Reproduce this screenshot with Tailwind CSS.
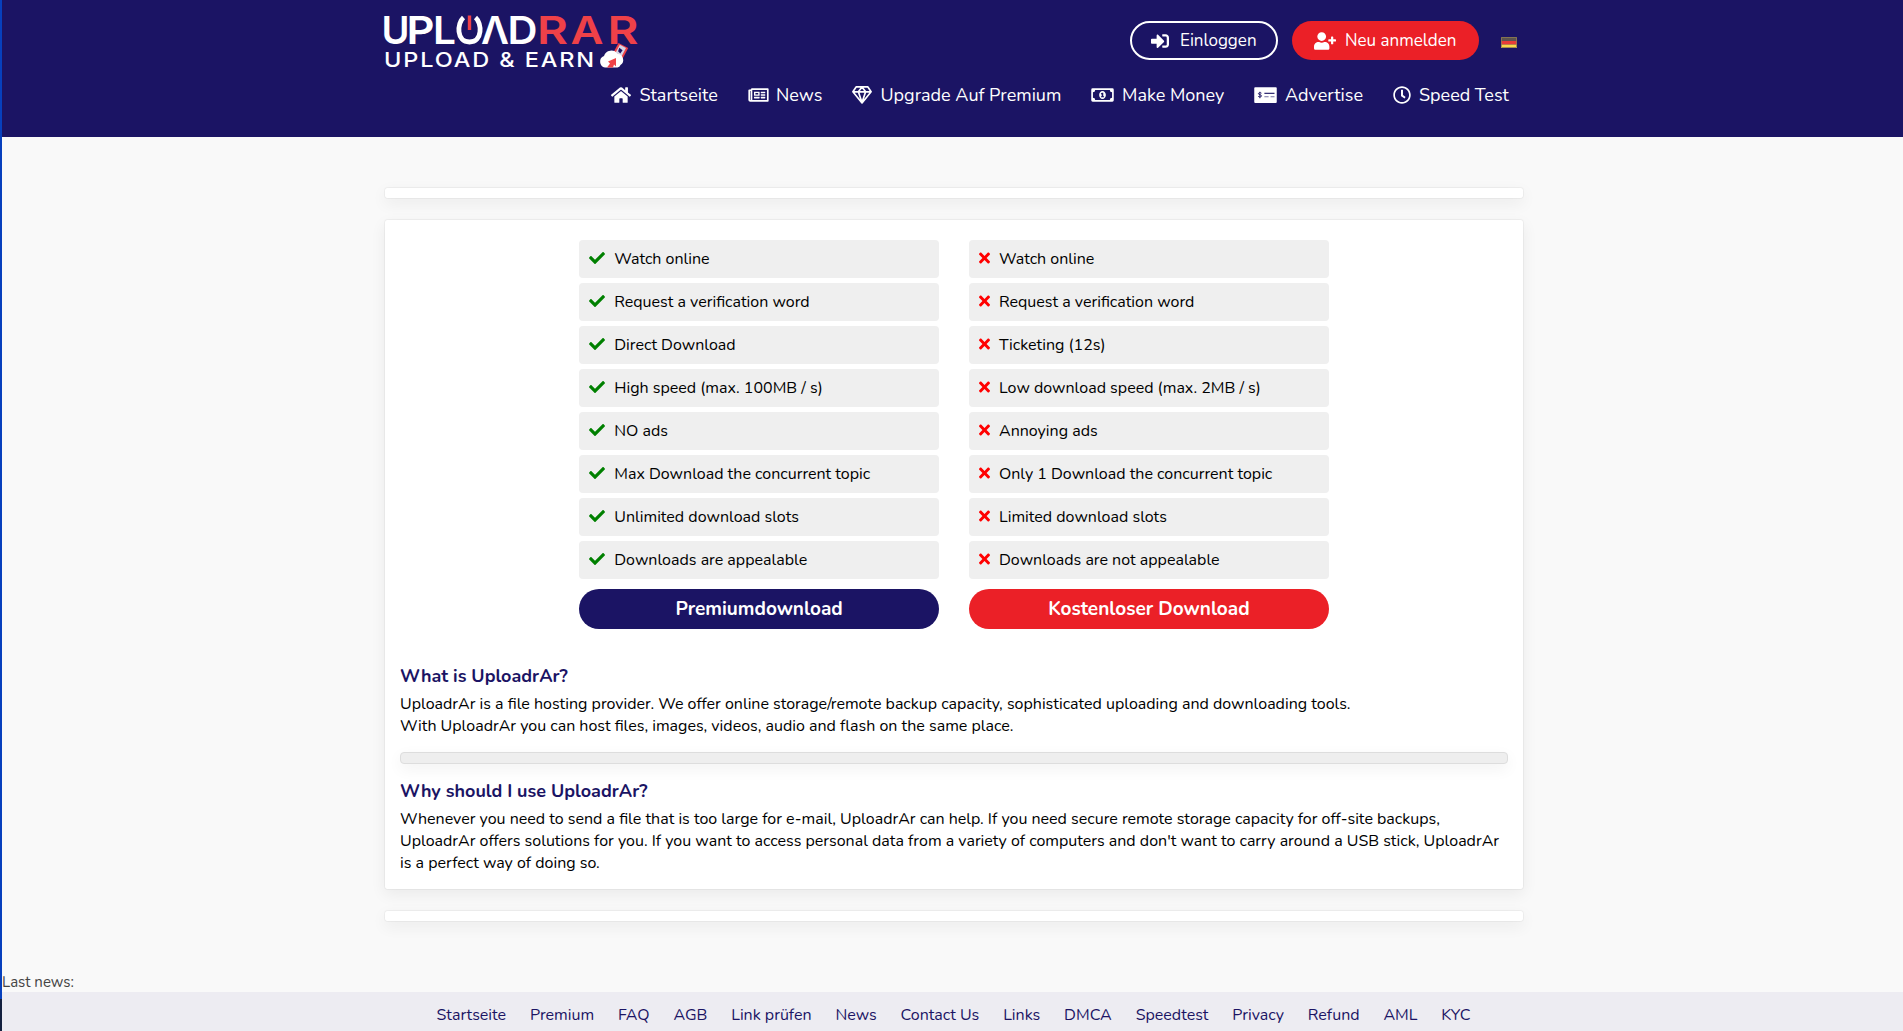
<!DOCTYPE html>
<html lang="de">

<head>
    <meta charset="UTF-8">
    <meta name="viewport" content="width=device-width, initial-scale=1.0">
    <title>UploadrAr</title>
    <script src="https://cdn.jsdelivr.net/npm/@tailwindcss/browser@4"></script>
</head>

<body class="flex h-[1031px] overflow-hidden bg-[#f9f9f9] font-['Nunito',Lato,sans-serif] text-base leading-[22px] text-black">
    <div class="flex w-[2px] shrink-0 flex-col">
        <div class="h-[999px] bg-[#0740bd]"></div>
        <div class="flex-1 bg-[#14203f]"></div>
    </div>

    <div class="flex min-w-0 flex-1 flex-col">
        <header class="h-[137px] bg-[#1b1464] pl-[382px] text-lg leading-6 text-white">
            <div class="flex h-[83px] w-[1140px]">
                <svg class="mt-[5px] h-[72px] w-[260px] shrink-0 overflow-visible" viewBox="384 5 260 72" font-family="Inter,sans-serif" font-weight="600">
                    <g font-size="38.5" fill="#fff">
                        <text x="381.5" y="43.500" textLength="28" lengthAdjust="spacingAndGlyphs">U</text>
                        <text x="406.5" y="43.500" textLength="28" lengthAdjust="spacingAndGlyphs">P</text>
                        <text x="433" y="43.500" textLength="23" lengthAdjust="spacingAndGlyphs">L</text>
                        <text x="481" y="43.500" textLength="28" lengthAdjust="spacingAndGlyphs">Λ</text>
                        <text x="507.500" y="43.500" textLength="30" lengthAdjust="spacingAndGlyphs">D</text>
                    </g>
                    <path d="M463.500 17.500C457 23 456 42 469.500 42C483 42 482 23 475.500 17.500" fill="none" stroke="#fff" stroke-width="4.8" />
                    <path d="M469.500 15.500v14.500" stroke="#ef4148" stroke-width="3.400" />
                    <g font-size="38.5" fill="#ef4148">
                        <text x="537" y="43.500" textLength="31" lengthAdjust="spacingAndGlyphs">R</text>
                        <text x="570.500" y="43.500" textLength="33" lengthAdjust="spacingAndGlyphs">A</text>
                        <text x="607.500" y="43.500" textLength="31" lengthAdjust="spacingAndGlyphs">R</text>
                    </g>
                    <text x="384" y="66.500" font-size="20" font-weight="500" fill="#fff" letter-spacing="1.6" textLength="212" lengthAdjust="spacingAndGlyphs">UPLOAD &amp; EARN</text>
                    <g transform="rotate(28 621 51)">
                        <path d="M615 45h11v13h-11z" fill="#ef4148" />
                        <path d="M617 46h7v11h-7z" fill="#d8d5e4" />
                        <path d="M618 49l4 .5-.5 4-3-1z" fill="#1b1464" />
                    </g>
                    <path d="M605 67.500a6 6 0 0 1-1-11.500a7.500 7.500 0 0 1 13.500-2a6 6 0 0 1 3 11a4 4 0 0 1-3 2.500z" fill="#fff" />
                    <path d="M607 67.500l3-4-2-2 8-3.500v8.500l-2-2-1 3z" fill="#ef4148" />
                </svg>
                <div class="mt-[21px] ml-auto flex h-[39px] items-center text-[17px]">
                    <a href="#" class="mr-[14px] flex h-[39px] w-[148px] items-center rounded-full border-2 border-white pl-[19px]">
                        <svg class="mr-[11px] size-[18px]" viewBox="0 0 512 512" fill="currentColor"><path d="M416 448h-84c-6.600 0-12-5.400-12-12v-40c0-6.600 5.400-12 12-12h84c17.700 0 32-14.300 32-32V160c0-17.700-14.300-32-32-32h-84c-6.600 0-12-5.400-12-12V76c0-6.600 5.400-12 12-12h84c53 0 96 43 96 96v192c0 53-43 96-96 96zm-47-201L201 79c-15-15-41-4.500-41 17v96H24c-13.300 0-24 10.700-24 24v96c0 13.300 10.700 24 24 24h136v96c0 21.500 26 32 41 17l168-168c9.300-9.400 9.300-24.600 0-34z" /></svg>
                        <span>Einloggen</span>
                    </a>
                    <a href="#" class="mr-[22px] flex h-[39px] w-[187px] items-center rounded-full bg-[#eb2027] pl-[22px]">
                        <svg class="mr-[9px] h-[18px] w-[22px]" viewBox="0 0 640 512" fill="currentColor"><path d="M624 208h-64v-64c0-8.800-7.200-16-16-16h-32c-8.800 0-16 7.200-16 16v64h-64c-8.800 0-16 7.200-16 16v32c0 8.800 7.200 16 16 16h64v64c0 8.800 7.200 16 16 16h32c8.800 0 16-7.200 16-16v-64h64c8.800 0 16-7.200 16-16v-32c0-8.800-7.200-16-16-16zm-400 48c70.700 0 128-57.300 128-128S294.700 0 224 0 96 57.300 96 128s57.300 128 128 128zm89.600 32h-16.700c-22.200 10.200-46.900 16-72.900 16s-50.600-5.800-72.900-16h-16.700C60.200 288 0 348.200 0 422.400V464c0 26.500 21.500 48 48 48h352c26.500 0 48-21.500 48-48v-41.600c0-74.200-60.200-134.400-134.400-134.400z" /></svg>
                        <span>Neu anmelden</span>
                    </a>
                    <svg class="mt-[3px] mr-[7px] h-[11px] w-4" viewBox="0 0 16 11">
                        <path d="M0 0h16v4H0z" fill="#5b5350" />
                        <path d="M0 4h16v3.500H0z" fill="#e83c38" />
                        <path d="M0 7.500h16V11H0z" fill="#f8d84a" />
                        <path d="M.5.500h15v10H.5z" fill="none" stroke="#8e7d50" stroke-opacity=".8" />
                    </svg>
                </div>
            </div>
            <nav class="ml-[227px] flex h-6 items-center whitespace-nowrap">
                <a href="#" class="flex w-[137px] items-center">
                    <svg class="mr-[8.5px] h-[18px] w-5" viewBox="0 0 576 512" fill="currentColor"><path d="M280.370 148.260L96 300.110V464a16 16 0 0 0 16 16l112.060-.29a16 16 0 0 0 15.920-16V368a16 16 0 0 1 16-16h64a16 16 0 0 1 16 16v95.640a16 16 0 0 0 16 16.050L464 480a16 16 0 0 0 16-16V300L295.670 148.260a12.190 12.190 0 0 0-15.300 0zM571.600 251.470L488 182.560V44.050a12 12 0 0 0-12-12h-56a12 12 0 0 0-12 12v72.610L318.470 43a48 48 0 0 0-61 0L4.340 251.470a12 12 0 0 0-1.600 16.900l25.500 31A12 12 0 0 0 45.150 301l235.220-193.740a12.190 12.190 0 0 1 15.300 0L530.900 301a12 12 0 0 0 16.900-1.600l25.500-31a12 12 0 0 0-1.700-16.930z" /></svg>
                    <span>Startseite</span>
                </a>
                <a href="#" class="flex w-[104px] items-center">
                    <svg class="mr-[7px] h-[18px] w-[21px]" viewBox="0 0 576 512" fill="currentColor"><path d="M552 64H112c-20.858 0-38.643 13.377-45.248 32H24c-13.255 0-24 10.745-24 24v272c0 30.928 25.072 56 56 56h496c13.255 0 24-10.745 24-24V88c0-13.255-10.745-24-24-24zM48 392V144h16v248c0 4.411-3.589 8-8 8s-8-3.589-8-8zm480 8H111.422c.374-2.614.578-5.283.578-8V112h416v288zM172 280h136c6.627 0 12-5.373 12-12v-96c0-6.627-5.373-12-12-12H172c-6.627 0-12 5.373-12 12v96c0 6.627 5.373 12 12 12zm28-80h80v40h-80v-40zm-40 140v-24c0-6.627 5.373-12 12-12h136c6.627 0 12 5.373 12 12v24c0 6.627-5.373 12-12 12H172c-6.627 0-12-5.373-12-12zm192 0v-24c0-6.627 5.373-12 12-12h104c6.627 0 12 5.373 12 12v24c0 6.627-5.373 12-12 12H364c-6.627 0-12-5.373-12-12zm0-144v-24c0-6.627 5.373-12 12-12h104c6.627 0 12 5.373 12 12v24c0 6.627-5.373 12-12 12H364c-6.627 0-12-5.373-12-12zm0 72v-24c0-6.627 5.373-12 12-12h104c6.627 0 12 5.373 12 12v24c0 6.627-5.373 12-12 12H364c-6.627 0-12-5.373-12-12z" /></svg>
                    <span>News</span>
                </a>
                <a href="#" class="flex w-[239px] items-center">
                    <svg class="mr-[8.5px] h-[18px] w-5" viewBox="0 0 576 512" fill="none" stroke="currentColor" stroke-width="48" stroke-linejoin="round"><path d="M118 24h340l92 140-262 320L26 164zM26 164h524M288 24L184 164l104 310 104-310z" /></svg>
                    <span>Upgrade Auf Premium</span>
                </a>
                <a href="#" class="flex w-[163px] items-center">
                    <svg class="mr-2 h-[18px] w-[23px]" viewBox="0 0 640 512" fill="currentColor"><path fill-rule="evenodd" d="M40 64h560a40 40 0 0 1 40 40v304a40 40 0 0 1-40 40H40a40 40 0 0 1-40-40V104a40 40 0 0 1 40-40zM48 176v160a64 64 0 0 1 64 64h416a64 64 0 0 1 64-64V176a64 64 0 0 1-64-64H112a64 64 0 0 1-64 64zM320 144c53 0 96 50 96 112s-43 112-96 112-96-50-96-112 43-112 96-112zM304 192l-32 22 10 26 16-8v58h-22v30h88v-30h-22V192z" /></svg>
                    <span>Make Money</span>
                </a>
                <a href="#" class="flex w-[139px] items-center">
                    <svg class="mr-2 h-[18px] w-[23px]" viewBox="0 0 640 512">
                        <rect y="32" width="640" height="448" rx="28" fill="#fff" />
                        <path d="M206 205c-20-20-88-20-88 14 0 36 90 25 90 62 0 38-70 36-96 14M160 164v184" fill="none" stroke="#1b1464" stroke-width="26" />
                        <path d="M288 208h288" stroke="#1b1464" stroke-width="32" />
                        <path d="M288 304h120M464 304h112" stroke="#1b1464" stroke-width="32" stroke-opacity=".6" />
                    </svg>
                    <span>Advertise</span>
                </a>
                <a href="#" class="flex items-center">
                    <svg class="mr-2 size-[18px]" viewBox="0 0 512 512" fill="currentColor"><path d="M256 8C119 8 8 119 8 256s111 248 248 248 248-111 248-248S393 8 256 8zm0 448c-110.500 0-200-89.500-200-200S145.500 56 256 56s200 89.500 200 200-89.500 200-200 200zm61.800-104.400l-84.900-61.700c-3.100-2.300-4.900-5.900-4.900-9.700V116c0-6.600 5.400-12 12-12h32c6.600 0 12 5.400 12 12v141.700l66.800 48.600c5.400 3.900 6.500 11.400 2.600 16.800L334.600 349c-3.900 5.300-11.400 6.500-16.800 2.600z" /></svg>
                    <span>Speed Test</span>
                </a>
            </nav>
        </header>

        <main class="ml-[382px] flex w-[1140px] flex-col gap-5 pt-[50px]">
            <div class="h-3 rounded-sm border border-black/4 bg-white bg-clip-padding shadow-[0_5px_15px_rgba(0,0,0,0.06)]"></div>

            <section class="h-[671px] rounded-sm border border-black/4 bg-white bg-clip-padding px-[15px] pt-5 shadow-[0_5px_15px_rgba(0,0,0,0.06)]">
                <div class="mx-auto grid w-[749.5px] grid-cols-2 gap-[30px]">
                    <div>
                        <ul id="premium-list" class="mb-[10px] space-y-[5px]"></ul>
                        <button class="block h-10 w-full rounded-full bg-[#1b1464] text-[19px] font-bold text-white">Premiumdownload</button>
                    </div>
                    <div>
                        <ul id="free-list" class="mb-[10px] space-y-[5px]"></ul>
                        <button class="block h-10 w-full rounded-full bg-[#eb2027] text-[19px] font-bold text-white">Kostenloser Download</button>
                    </div>
                </div>

                <h2 class="mt-9 text-lg leading-[22px] font-bold text-[#1b1464]">What is UploadrAr?</h2>
                <p class="mt-[6px]">UploadrAr is a file hosting provider. We offer online storage/remote backup capacity, sophisticated uploading and downloading tools.<br>With UploadrAr you can host files, images, videos, audio and flash on the same place.</p>
                <div class="mt-[15px] h-3 rounded-sm border border-[#ddd] bg-[#eee] shadow-[0_5px_15px_rgba(0,0,0,0.06)]"></div>
                <h2 class="mt-4 text-lg leading-[22px] font-bold text-[#1b1464]">Why should I use UploadrAr?</h2>
                <p class="mt-[6px]">Whenever you need to send a file that is too large for e-mail, UploadrAr can help. If you need secure remote storage capacity for off-site backups, UploadrAr offers solutions for you. If you want to access personal data from a variety of computers and don't want to carry around a USB stick, UploadrAr is a perfect way of doing so.</p>
            </section>

            <div class="h-3 rounded-sm border border-black/4 bg-white bg-clip-padding shadow-[0_5px_15px_rgba(0,0,0,0.06)]"></div>
        </main>

        <div class="mt-auto h-[21px] text-[15px] text-[#444]">Last news:</div>
        <footer class="h-[39px] bg-[#edecf2] pt-3 pl-[434.5px] text-[#1b1464]">
            <nav class="flex w-[1034px] justify-between whitespace-nowrap">
                <a href="#">Startseite</a>
                <a href="#">Premium</a>
                <a href="#">FAQ</a>
                <a href="#">AGB</a>
                <a href="#">Link prüfen</a>
                <a href="#">News</a>
                <a href="#">Contact Us</a>
                <a href="#">Links</a>
                <a href="#">DMCA</a>
                <a href="#">Speedtest</a>
                <a href="#">Privacy</a>
                <a href="#">Refund</a>
                <a href="#">AML</a>
                <a href="#">KYC</a>
            </nav>
        </footer>
    </div>

    <script>
        const premium = [
            'Watch online',
            'Request a verification word',
            'Direct Download',
            'High speed (max. 100MB / s)',
            'NO ads',
            'Max Download the concurrent topic',
            'Unlimited download slots',
            'Downloads are appealable'
        ];
        const free = [
            'Watch online',
            'Request a verification word',
            'Ticketing (12s)',
            'Low download speed (max. 2MB / s)',
            'Annoying ads',
            'Only 1 Download the concurrent topic',
            'Limited download slots',
            'Downloads are not appealable'
        ];
        const check = '<svg class="mr-[9px] mb-[2px] size-4" viewBox="0 0 512 512" fill="#008000"><path d="M173.898 439.404l-166.400-166.400c-9.997-9.997-9.997-26.206 0-36.204l36.203-36.204c9.997-9.998 26.207-9.998 36.204 0L192 312.690 432.095 72.596c9.997-9.997 26.207-9.997 36.204 0l36.203 36.204c9.997 9.997 9.997 26.206 0 36.204l-294.400 294.401c-9.998 9.997-26.207 9.997-36.204-.001z"/></svg>';
        const cross = '<svg class="mr-[9px] mb-[2px] h-4 w-[11px]" viewBox="0 0 352 512" fill="#f00"><path d="M242.720 256l100.070-100.070c12.280-12.280 12.280-32.190 0-44.480l-22.240-22.240c-12.280-12.280-32.190-12.280-44.480 0L176 189.280 75.930 89.210c-12.280-12.280-32.190-12.280-44.480 0L9.210 111.450c-12.280 12.280-12.280 32.190 0 44.480L109.280 256 9.210 356.070c-12.280 12.280-12.280 32.190 0 44.480l22.240 22.240c12.280 12.280 32.200 12.280 44.480 0L176 322.720l100.070 100.070c12.280 12.280 32.200 12.280 44.480 0l22.240-22.240c12.280-12.280 12.280-32.190 0-44.480L242.720 256z"/></svg>';

        function renderList(id, items, icon) {
            document.getElementById(id).innerHTML = items.map(text => `
                <li class="flex h-[38px] items-center rounded-sm bg-[#efefef] pl-[10px]">${icon}<span>${text}</span></li>
            `).join('');
        }

        renderList('premium-list', premium, check);
        renderList('free-list', free, cross);
    </script>
</body>

</html>
